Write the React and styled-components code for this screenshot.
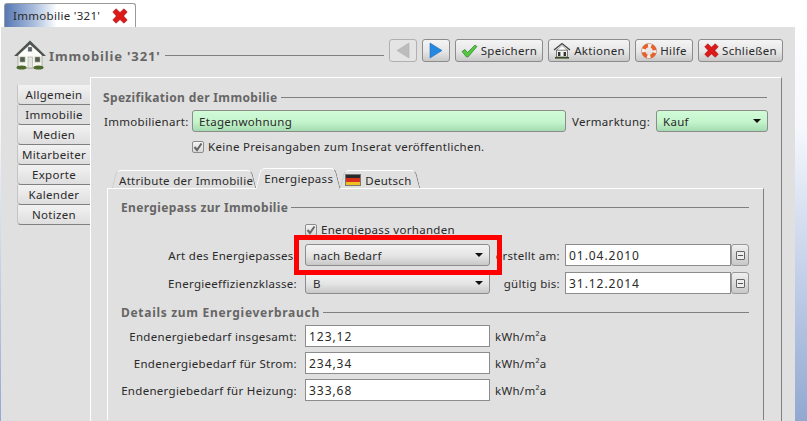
import { Fragment } from "react";
import styled, { createGlobalStyle } from "styled-components";

const GlobalStyle = createGlobalStyle`
  html, body {
    margin: 0;
    padding: 0;
    background: #fff;
  }
`;

const Page = styled.div`
  position: relative;
  width: 807px;
  height: 421px;
  overflow: hidden;
  font-family: "Noto Sans", "DejaVu Sans", sans-serif;
  font-size: 11.5px;
  letter-spacing: 0.3px;
  color: #2a2a2a;
  background: linear-gradient(#ffffff 0%, #f6f8fc 30%, #c0cee8 67%, #92a8d0 100%);
`;

const TabStrip = styled.div`
  height: 27px;
  box-sizing: border-box;
  padding: 3px 0 0 4px;
  background: #fff;
`;

const WindowTab = styled.div`
  width: 132px;
  height: 24px;
  box-sizing: border-box;
  display: flex;
  align-items: center;
  gap: 12px;
  padding-left: 8px;
  border: 1px solid #999;
  border-bottom: none;
  border-radius: 3px 3px 0 0;
  background: linear-gradient(90deg, #5878b4 0%, #a8bcdc 22%, #fff 40%);
`;

const Panel = styled.div`
  width: 794px;
  height: 394px;
  margin-left: 1px;
  background: #e0e0e0;
`;

const Header = styled.div`
  height: 50px;
  box-sizing: border-box;
  display: flex;
  align-items: flex-start;
  padding: 12px 12px 0 12px;
`;

const TitleGroup = styled.div`
  flex: 1;
  display: flex;
  align-items: center;
  height: 32px;
`;

const Title = styled.span`
  margin-left: 2px;
  padding-top: 2px;
  font-size: 13px;
  font-weight: bold;
  color: #666;
  letter-spacing: 0.85px;
  white-space: nowrap;
`;

const TitleLine = styled.div`
  width: 219px;
  height: 1px;
  margin-left: 4px;
  background: #808080;
`;

const Toolbar = styled.div`
  display: flex;
  gap: 5px;
`;

const ToolButton = styled.div`
  height: 23px;
  width: ${(p) => p.$w}px;
  box-sizing: border-box;
  display: flex;
  align-items: center;
  justify-content: center;
  gap: 3px;
  border: 1px solid ${(p) => (p.$disabled ? "#b0b0b0" : "#8c8c8c")};
  border-radius: 3px;
  background: ${(p) =>
    p.$disabled ? "#e4e4e4" : "linear-gradient(#f4f4f4, #e6e6e6 55%, #c8c8c8)"};
  white-space: nowrap;
`;

const Body = styled.div`
  display: flex;
  height: 344px;
  padding-left: 16px;
`;

const SideTabs = styled.div`
  width: 73px;
  padding-top: 8px;
  flex: none;
`;

const SideTab = styled.div`
  height: 20px;
  box-sizing: border-box;
  display: flex;
  align-items: center;
  justify-content: center;
  border-left: 1px solid #c4c4c4;
  border-bottom: 1px solid #808080;
  border-radius: 0 0 0 4px;
  background: ${(p) =>
    p.$active ? "#e0e0e0" : "linear-gradient(#f2f2f2, #dedede)"};
`;

const Content = styled.div`
  width: 692px;
  box-sizing: border-box;
  padding: 12px 14px 0 12px;
  border-top: 1px solid #fff;
  border-left: 1px solid #fff;
  border-right: 1px solid #808080;
`;

const SectionTitle = styled.div`
  display: flex;
  align-items: center;
  gap: 3px;
  height: 14px;
  margin-top: ${(p) => p.$mt || 0}px;
  font-size: 12px;
  font-weight: bold;
  color: #666;
  letter-spacing: ${(p) => p.$ls || 0.35}px;
  white-space: nowrap;

  &::after {
    content: "";
    flex: 1;
    height: 1px;
    background: #808080;
  }
`;

const TopRow = styled.div`
  display: flex;
  align-items: center;
  height: 22px;
  margin-top: 6px;
`;

const Label = styled.span`
  flex: none;
  width: ${(p) => (p.$w ? `${p.$w}px` : "auto")};
  padding-left: ${(p) => p.$pl || 0}px;
  box-sizing: border-box;
  white-space: nowrap;
`;

const GreenField = styled.div`
  height: 22px;
  width: ${(p) => p.$w}px;
  flex: none;
  box-sizing: border-box;
  display: flex;
  align-items: center;
  justify-content: space-between;
  padding: 0 6px 0 6px;
  border: 1px solid #8c8c8c;
  border-radius: 3px;
  background: linear-gradient(#d0fcd8, #c4f4cc 55%, #a4dcb0);
`;

const Arrow = styled.span`
  width: 0;
  height: 0;
  border-left: 4px solid transparent;
  border-right: 4px solid transparent;
  border-top: 4px solid #111;
`;

const CheckRow = styled.div`
  display: flex;
  align-items: center;
  gap: 4px;
  height: 13px;
  margin: ${(p) => p.$m};
`;

const CheckBox = styled.span`
  width: 12px;
  height: 12px;
  box-sizing: border-box;
  display: flex;
  align-items: center;
  justify-content: center;
  flex: none;
  border: 1px solid #8c8c8c;
  border-radius: 2px;
  background: linear-gradient(#f4f4f4, #d8d8d8);
`;

const InnerTabs = styled.div`
  display: flex;
  align-items: flex-end;
  height: 20px;
  margin: 15px 0 0 9px;
`;

const InnerTab = styled.div`
  position: relative;
  z-index: ${(p) => (p.$active ? 1 : 0)};
  height: ${(p) => (p.$active ? 21 : 18)}px;
  margin-bottom: ${(p) => (p.$active ? -1 : 0)}px;
  box-sizing: border-box;
  display: flex;
  align-items: center;
  gap: 4px;
  padding: ${(p) => p.$pad};
  background: #e0e0e0;
  white-space: nowrap;

  /* slanted left and right tab edges */
  &::before,
  &::after {
    content: "";
    position: absolute;
    top: 0;
    bottom: 0;
    width: 14px;
    box-sizing: border-box;
    border-top: 1px solid #fff;
  }

  &::before {
    left: 2px;
    border-left: 1px solid ${(p) => (p.$active ? "#fff" : "#c8c8c8")};
    border-radius: 5px 0 0 0;
    transform: skewX(-14deg);
  }

  &::after {
    right: 2px;
    border-right: 1px solid #808080;
    border-radius: 0 5px 0 0;
    transform: skewX(14deg);
  }
`;

const TabTop = styled.span`
  position: absolute;
  top: 0;
  left: 12px;
  right: 12px;
  height: 1px;
  background: #fff;
`;

const InnerPanel = styled.div`
  width: 657px;
  height: 232px;
  box-sizing: border-box;
  padding: 11px 14px 0 13px;
  border-top: 1px solid #fff;
  border-left: 1px solid #fff;
  border-right: 1px solid #808080;
  margin-left: 4px;
`;

const FormGrid = styled.div`
  display: grid;
  grid-template-columns: 176px 1fr;
  column-gap: 8px;
  row-gap: ${(p) => p.$gap}px;
  align-items: center;
  margin-top: ${(p) => p.$mt}px;
`;

const DateGrid = styled.div`
  display: grid;
  grid-template-columns: 176px 193px 75px 166px 18px;
  align-items: center;
  row-gap: 6px;
  margin-top: 8px;
`;

const RightLabel = styled(Label)`
  text-align: right;
  padding-right: ${(p) => p.$pr || 0}px;
`;

const Combo = styled.div`
  height: 22px;
  margin-left: 8px;
  width: 185px;
  box-sizing: border-box;
  display: flex;
  align-items: center;
  justify-content: space-between;
  padding: 0 6px 0 7px;
  border: 1px solid #8c8c8c;
  border-radius: 3px;
  background: linear-gradient(#f4f4f4, #e4e4e4 55%, #c8c8c8);
`;

const TextField = styled.div`
  height: 22px;
  width: ${(p) => (p.$w ? `${p.$w}px` : "auto")};
  flex: none;
  box-sizing: border-box;
  display: flex;
  align-items: center;
  padding-left: 3px;
  border: 1px solid #8c8c8c;
  background: #fff;
  font-size: 12px;
  letter-spacing: 0.95px;
`;

const ValueRow = styled.div`
  display: flex;
  align-items: center;
  gap: 5px;
`;

const MiniButton = styled.div`
  width: 18px;
  height: 22px;
  box-sizing: border-box;
  display: flex;
  align-items: center;
  justify-content: center;
  border: 1px solid #999;
  border-radius: 3px;
  background: linear-gradient(#f0f0f0, #c8c8c8);

  &::after {
    content: "";
    width: 9px;
    height: 9px;
    box-sizing: border-box;
    border: 1px solid #666;
    border-radius: 1px;
    background: linear-gradient(#555, #555) center / 5px 1px no-repeat, #eee;
  }
`;

const RedFrame = styled.div`
  position: absolute;
  z-index: 2;
  left: 294px;
  top: 235px;
  width: 208px;
  height: 40px;
  box-sizing: border-box;
  border: 5px solid #f00;
`;

const House = () => (
  <svg width="34" height="32" viewBox="0 0 34 32">
    <rect x="5" y="15" width="24" height="14" fill="#f6f6f0" stroke="#8a8a80" strokeWidth="0.6" />
    <path d="M1 17 L17 1.5 L33 17 L29.5 17 L17 6 L4.5 17 Z" fill="#4e5450" />
    <path d="M5 16.5 L17 5.5 L29 16.5 Z" fill="#fcfcfa" />
    <rect x="15" y="8" width="4" height="4.5" fill="#5a6468" stroke="#aaa" strokeWidth="0.4" />
    <rect x="7" y="18" width="5" height="5" fill="#505c50" stroke="#a8a890" strokeWidth="0.6" />
    <rect x="22" y="18" width="5" height="5" fill="#505c50" stroke="#a8a890" strokeWidth="0.6" />
    <rect x="15" y="18" width="4.5" height="11" fill="#e4e4dc" stroke="#999" strokeWidth="0.5" />
    <ellipse cx="8.5" cy="28.5" rx="5" ry="2" fill="#4d6b2c" />
    <ellipse cx="25.5" cy="28.5" rx="5" ry="2" fill="#4d6b2c" />
  </svg>
);

const SmallHouse = () => (
  <svg width="18" height="18" viewBox="0 0 18 18">
    <path d="M1 8 L9 1.5 L17 8" fill="none" stroke="#444" strokeWidth="1.3" />
    <path d="M3.5 8 H14.5 V15 H3.5 Z" fill="#f4f4f0" stroke="#555" strokeWidth="0.8" />
    <path d="M4 8 L9 3.5 L14 8 Z" fill="#fff" stroke="#666" strokeWidth="0.5" />
    <rect x="5" y="10" width="2.4" height="4" fill="#333" />
    <rect x="10.6" y="10" width="2.4" height="4" fill="#333" />
    <rect x="2" y="15" width="14" height="1.6" fill="#3a4a22" />
  </svg>
);

const RedCross = ({ size = 16 }) => (
  <svg width={size} height={size} viewBox="0 0 16 16">
    <path
      d="M0.8 4 L4 0.8 L8 4.4 L12 0.8 L15.2 4 L11.6 8 L15.2 12 L12 15.2 L8 11.6 L4 15.2 L0.8 12 L4.4 8 Z"
      fill="#dc1a1a"
      stroke="#a01010"
      strokeWidth="0.6"
    />
  </svg>
);

const GreenCheck = () => (
  <svg width="17" height="14" viewBox="0 0 17 14">
    <path
      d="M1 7.5 L4 5.5 L6.5 8.5 L14 1 L16 2.5 L7 13 L5.5 13 Z"
      fill="#52c83c"
      stroke="#3a7a3a"
      strokeWidth="0.7"
    />
  </svg>
);

const LifeRing = () => (
  <svg width="16" height="16" viewBox="0 0 16 16">
    <circle cx="8" cy="8" r="5.6" fill="none" stroke="#f6f2ee" strokeWidth="3.6" />
    <circle
      cx="8"
      cy="8"
      r="5.6"
      fill="none"
      stroke="#e8602c"
      strokeWidth="3.6"
      strokeDasharray="5.3 3.5"
      strokeDashoffset="-1.75"
    />
    <circle cx="8" cy="8" r="7.5" fill="none" stroke="#b06040" strokeWidth="0.5" />
  </svg>
);

const NavArrow = ({ dir, color, stroke }) => (
  <svg width="14" height="17" viewBox="0 0 14 17">
    <path
      d={dir === "left" ? "M13 1 V16 L1 8.5 Z" : "M1 1 V16 L13 8.5 Z"}
      fill={color}
      stroke={stroke}
      strokeWidth="0.6"
    />
  </svg>
);

const Tick = () => (
  <svg width="10" height="10" viewBox="0 0 10 10">
    <path d="M1.5 5 L4 8 L8.5 1.5" fill="none" stroke="#666" strokeWidth="2" />
  </svg>
);

const Flag = () => (
  <svg width="16" height="12" viewBox="0 0 16 12">
    <rect width="16" height="4" fill="#2a2a2a" />
    <rect y="4" width="16" height="4" fill="#d8301c" />
    <rect y="8" width="16" height="4" fill="#f0c020" />
    <rect x="0.5" y="0.5" width="15" height="11" fill="none" stroke="#777" />
  </svg>
);

const sideTabs = ["Allgemein", "Immobilie", "Medien", "Mitarbeiter", "Exporte", "Kalender", "Notizen"];

const consumption = [
  { label: "Endenergiebedarf insgesamt:", value: "123,12" },
  { label: "Endenergiebedarf für Strom:", value: "234,34" },
  { label: "Endenergiebedarf für Heizung:", value: "333,68" },
];

const App = () => {
  return (
    <Page>
      <GlobalStyle />
      <TabStrip>
        <WindowTab>
          Immobilie '321'
          <RedCross />
        </WindowTab>
      </TabStrip>

      <Panel>
        <Header>
          <TitleGroup>
            <House />
            <Title>Immobilie '321'</Title>
            <TitleLine />
          </TitleGroup>
          <Toolbar>
            <ToolButton $w={28} $disabled>
              <NavArrow dir="left" color="#bcbcbc" stroke="#b0b0b0" />
            </ToolButton>
            <ToolButton $w={28}>
              <NavArrow dir="right" color="#2488e0" stroke="#1c6cc0" />
            </ToolButton>
            <ToolButton $w={88}>
              <GreenCheck />
              Speichern
            </ToolButton>
            <ToolButton $w={82}>
              <SmallHouse />
              Aktionen
            </ToolButton>
            <ToolButton $w={58}>
              <LifeRing />
              Hilfe
            </ToolButton>
            <ToolButton $w={85}>
              <RedCross size={15} />
              Schließen
            </ToolButton>
          </Toolbar>
        </Header>

        <Body>
          <SideTabs>
            {sideTabs.map((tab) => (
              <SideTab key={tab} $active={tab === "Immobilie"}>
                {tab}
              </SideTab>
            ))}
          </SideTabs>

          <Content>
            <SectionTitle>Spezifikation der Immobilie</SectionTitle>
            <TopRow>
              <Label $w={89} $pl={1}>Immobilienart:</Label>
              <GreenField $w={374}>Etagenwohnung</GreenField>
              <Label $w={90} $pl={6}>Vermarktung:</Label>
              <GreenField $w={112}>
                Kauf
                <Arrow />
              </GreenField>
            </TopRow>
            <CheckRow $m="8px 0 0 89px">
              <CheckBox>
                <Tick />
              </CheckBox>
              <Label>Keine Preisangaben zum Inserat veröffentlichen.</Label>
            </CheckRow>

            <InnerTabs>
              <InnerTab $pad="2px 3px 0 7px">
                <TabTop />
                Attribute der Immobilie
              </InnerTab>
              <InnerTab $active $pad="0 7px 1px 8px">
                <TabTop />
                Energiepass
              </InnerTab>
              <InnerTab $pad="2px 8px 0 5px">
                <TabTop />
                <Flag />
                Deutsch
              </InnerTab>
            </InnerTabs>

            <InnerPanel>
              <SectionTitle>Energiepass zur Immobilie</SectionTitle>
              <CheckRow $m="9px 0 0 184px">
                <CheckBox>
                  <Tick />
                </CheckBox>
                <Label>Energiepass vorhanden</Label>
              </CheckRow>

              <DateGrid>
                <RightLabel>Art des Energiepasses:</RightLabel>
                <Combo>
                  nach Bedarf
                  <Arrow />
                </Combo>
                <RightLabel $pr={5}>erstellt am:</RightLabel>
                <TextField>01.04.2010</TextField>
                <MiniButton />
                <RightLabel>Energieeffizienzklasse:</RightLabel>
                <Combo>
                  B
                  <Arrow />
                </Combo>
                <RightLabel $pr={5}>gültig bis:</RightLabel>
                <TextField>31.12.2014</TextField>
                <MiniButton />
              </DateGrid>

              <SectionTitle $mt={11} $ls={0.7}>Details zum Energieverbrauch</SectionTitle>

              <FormGrid $gap={5} $mt={6}>
                {consumption.map((row) => (
                  <Fragment key={row.label}>
                    <RightLabel>{row.label}</RightLabel>
                    <ValueRow>
                      <TextField $w={185}>{row.value}</TextField>
                      <span>kWh/m²a</span>
                    </ValueRow>
                  </Fragment>
                ))}
              </FormGrid>
            </InnerPanel>
          </Content>
        </Body>
      </Panel>

      <RedFrame />
    </Page>
  );
};

export default App;
